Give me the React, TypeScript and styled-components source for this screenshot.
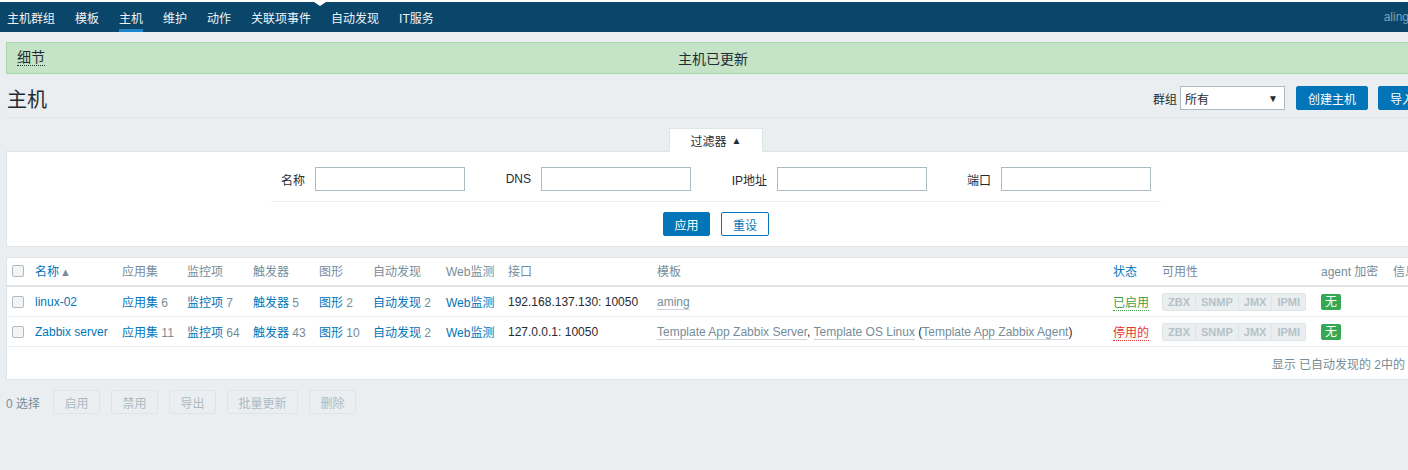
import React from 'react'
import styled, { createGlobalStyle } from 'styled-components'

const GlobalStyle = createGlobalStyle`
  body {
    margin: 0;
    background: #ebeef0;
    color: #1f2c33;
    font-family: "Liberation Sans", Arial, "Noto Sans CJK SC", sans-serif;
    font-size: 12px;
    overflow: hidden;
  }
`

const Page = styled.div`
  width: 1426px;
`

const TopNav = styled.nav`
  position: relative;
  display: flex;
  align-items: stretch;
  height: 30px;
  border-top: 2px solid #ffffff;
  background: #0a466a;
  padding-left: 7px;
  gap: 20px;
  &::before {
    content: '';
    position: absolute;
    top: 0;
    left: 314px;
    border-left: 6px solid transparent;
    border-right: 6px solid transparent;
    border-top: 4px solid #ffffff;
  }
`

const NavItem = styled.a<{ $active?: boolean }>`
  display: flex;
  align-items: center;
  color: #f0f3f5;
  text-decoration: none;
  border-bottom: 3px solid ${(p) => (p.$active ? '#1f85c9' : 'transparent')};
  padding-top: 3px;
`

const NavUser = styled.span`
  margin-left: auto;
  display: flex;
  align-items: center;
  padding-right: 17px;
  color: #7fa1b5;
`

const Main = styled.main`
  padding: 10px 6px 0 6px;
`

const Message = styled.div`
  position: relative;
  height: 30px;
  display: flex;
  align-items: center;
  justify-content: center;
  background: #c5e3c7;
  border: 1px solid #a6d8a8;
  font-size: 14px;
  color: #1f2c33;
`

const Details = styled.a`
  position: absolute;
  left: 10px;
  top: 7px;
  color: #1f2c33;
  text-decoration: none;
  line-height: 15px;
  border-bottom: 1px dotted #1f2c33;
`

const Header = styled.header`
  display: flex;
  align-items: center;
  height: 24px;
  margin-top: 12px;
  padding-bottom: 7px;
  border-bottom: 1px solid #dfe4e7;
`

const Title = styled.h1`
  margin: 0;
  padding-left: 1px;
  font-size: 20px;
  font-weight: normal;
  color: #1f2c33;
`

const HeaderControls = styled.div`
  margin-left: auto;
  margin-right: -16px;
  display: flex;
  align-items: center;
`

const SelectLabel = styled.span`
  margin-right: 3px;
`

const FakeSelect = styled.div`
  height: 24px;
  display: flex;
  align-items: center;
  justify-content: space-between;
  padding: 0 6px 0 4px;
  box-sizing: border-box;
  width: 105px;
  border: 1px solid #acbbc2;
  background: #ffffff;
  margin-right: 11px;
  font-size: 12px;
`

const Arrow = styled.span`
  font-size: 10px;
  color: #1f2c33;
`

const PrimaryButton = styled.button<{ $w?: number }>`
  height: 24px;
  width: ${(p) => p.$w ?? 47}px;
  padding: 0;
  border: 1px solid #0275b8;
  border-radius: 2px;
  background: #0275b8;
  color: #ffffff;
  font: inherit;
  margin-right: 10px;
`

const OutlineButton = styled.button`
  height: 24px;
  width: 48px;
  padding: 0;
  border: 1px solid #0275b8;
  border-radius: 2px;
  background: #ffffff;
  color: #0275b8;
  font: inherit;
`

const TabRow = styled.div`
  display: flex;
  justify-content: center;
  padding-left: 6px;
  margin-top: 10px;
`

const FilterTab = styled.div`
  position: relative;
  z-index: 1;
  width: 92px;
  height: 23px;
  margin-bottom: -1px;
  display: flex;
  align-items: center;
  justify-content: center;
  gap: 5px;
  background: #ffffff;
  border: 1px solid #dfe4e7;
  border-bottom: none;
`

const FilterBox = styled.section`
  background: #ffffff;
  border: 1px solid #dfe4e7;
  padding: 15px 0 10px 6px;
`

const FilterGrid = styled.div`
  width: 890px;
  margin: 0 auto;
  display: grid;
  grid-template-columns: 44px 150px 76px 150px 86px 150px 74px 150px;
  padding-right: 10px;
  box-sizing: border-box;
  align-items: center;
  padding-bottom: 10px;
  border-bottom: 1px solid #ebeef0;
`

const FilterLabel = styled.label`
  text-align: right;
  padding-right: 10px;
`

const TextInput = styled.input`
  width: 150px;
  height: 24px;
  box-sizing: border-box;
  border: 1px solid #acbbc2;
  padding: 0 5px;
  font: inherit;
`

const FilterButtons = styled.div`
  display: flex;
  justify-content: center;
  padding-top: 10px;
  & > button:first-child {
    margin-right: 11px;
  }
`

const TableBox = styled.section`
  margin-top: 10px;
  background: #ffffff;
  border: 1px solid #dfe4e7;
`

const Table = styled.table`
  width: 100%;
  table-layout: fixed;
  border-collapse: collapse;
  white-space: nowrap;
`

const Th = styled.th<{ $sort?: boolean }>`
  height: 28px;
  box-sizing: border-box;
  padding: 0 0 3px 5px;
  text-align: left;
  font-weight: normal;
  color: ${(p) => (p.$sort ? '#0275b8' : '#768d99')};
  border-bottom: 2px solid #dfe4e7;
  overflow: hidden;
`

const Td = styled.td`
  height: 29px;
  padding: 0 0 0 5px;
  border-bottom: 1px solid #ebeef0;
  overflow: hidden;
`

const SortArrow = styled.span`
  color: #768d99;
  font-size: 11px;
  margin-left: 1px;
`

const Check = styled.span`
  display: inline-block;
  width: 10px;
  height: 10px;
  border: 1px solid #acbbc2;
  border-radius: 2px;
  background: #f2f4f5;
  vertical-align: middle;
`

const Link = styled.a`
  color: #0275b8;
  text-decoration: none;
`

const Count = styled.span`
  color: #768d99;
`

const AltLink = styled.a`
  color: #768d99;
  text-decoration: none;
  border-bottom: 1px solid #cbd4d9;
`

const Status = styled.span<{ $on: boolean }>`
  color: ${(p) => (p.$on ? '#429e47' : '#e33734')};
  border-bottom: 1px dotted ${(p) => (p.$on ? '#429e47' : '#e33734')};
`

const Avail = styled.span`
  display: inline-flex;
  border: 1px solid #dfe4e7;
  border-radius: 2px;
  vertical-align: middle;
`

const AvailItem = styled.span`
  height: 16px;
  line-height: 16px;
  padding: 0 5px;
  background: #ebeef0;
  color: #b4c2c9;
  font-size: 11px;
  font-weight: bold;
  & + & {
    border-left: 1px solid #dfe4e7;
  }
`

const Encrypt = styled.span`
  display: inline-block;
  width: 20px;
  height: 16px;
  line-height: 16px;
  text-align: center;
  border-radius: 2px;
  background: #34a853;
  color: #ffffff;
  vertical-align: middle;
`

const TableFooter = styled.div`
  height: 32px;
  display: flex;
  align-items: center;
  justify-content: flex-end;
  padding-right: 4px;
  color: #768d99;
`

const ActionBar = styled.div`
  display: flex;
  align-items: center;
  margin-top: 10px;
  gap: 11px;
`

const Selected = styled.span`
  color: #768d99;
  margin-right: 2px;
`

const DisabledButton = styled.button<{ $w?: number }>`
  height: 24px;
  width: ${(p) => p.$w ?? 47}px;
  padding: 0;
  border: 1px solid #dfe4e7;
  border-radius: 2px;
  background: transparent;
  color: #acbbc2;
  font: inherit;
`

const cols = [23, 87, 65, 66, 66, 54, 73, 62, 149, 456, 49, 159, 72, 40]

type Host = {
  name: string
  apps: number
  items: number
  triggers: number
  graphs: number
  discovery: number
  iface: string
  templates: React.ReactNode
  enabled: boolean
}

const hosts: Host[] = [
  {
    name: 'linux-02',
    apps: 6,
    items: 7,
    triggers: 5,
    graphs: 2,
    discovery: 2,
    iface: '192.168.137.130: 10050',
    templates: <AltLink>aming</AltLink>,
    enabled: true,
  },
  {
    name: 'Zabbix server',
    apps: 11,
    items: 64,
    triggers: 43,
    graphs: 10,
    discovery: 2,
    iface: '127.0.0.1: 10050',
    templates: (
      <>
        <AltLink>Template App Zabbix Server</AltLink>,{' '}
        <AltLink>Template OS Linux</AltLink> (
        <AltLink>Template App Zabbix Agent</AltLink>)
      </>
    ),
    enabled: false,
  },
]

const navItems = ['主机群组', '模板', '主机', '维护', '动作', '关联项事件', '自动发现', 'IT服务']

const App: React.FC = () => {
  return (
    <Page>
      <GlobalStyle />
      <TopNav>
        {navItems.map((n) => (
          <NavItem key={n} $active={n === '主机'}>
            {n}
          </NavItem>
        ))}
        <NavUser>aling</NavUser>
      </TopNav>
      <Main>
        <Message>
          <Details>细节</Details>
          主机已更新
        </Message>

        <Header>
          <Title>主机</Title>
          <HeaderControls>
            <SelectLabel>群组</SelectLabel>
            <FakeSelect>
              所有<Arrow>▼</Arrow>
            </FakeSelect>
            <PrimaryButton $w={72}>创建主机</PrimaryButton>
            <PrimaryButton $w={48}>导入</PrimaryButton>
          </HeaderControls>
        </Header>

        <TabRow>
          <FilterTab>
            过滤器 <Arrow>▲</Arrow>
          </FilterTab>
        </TabRow>
        <FilterBox>
          <FilterGrid>
            <FilterLabel>名称</FilterLabel>
            <TextInput />
            <FilterLabel>DNS</FilterLabel>
            <TextInput />
            <FilterLabel>IP地址</FilterLabel>
            <TextInput />
            <FilterLabel>端口</FilterLabel>
            <TextInput />
          </FilterGrid>
          <FilterButtons>
            <PrimaryButton $w={47}>应用</PrimaryButton>
            <OutlineButton>重设</OutlineButton>
          </FilterButtons>
        </FilterBox>

        <TableBox>
          <Table>
            <colgroup>
              {cols.map((w, i) => (
                <col key={i} style={{ width: w }} />
              ))}
            </colgroup>
            <thead>
              <tr>
                <Th>
                  <Check />
                </Th>
                <Th $sort>
                  名称<SortArrow>▲</SortArrow>
                </Th>
                <Th>应用集</Th>
                <Th>监控项</Th>
                <Th>触发器</Th>
                <Th>图形</Th>
                <Th>自动发现</Th>
                <Th>Web监测</Th>
                <Th>接口</Th>
                <Th>模板</Th>
                <Th $sort>状态</Th>
                <Th>可用性</Th>
                <Th>agent 加密</Th>
                <Th>信息</Th>
              </tr>
            </thead>
            <tbody>
              {hosts.map((h) => (
                <tr key={h.name}>
                  <Td>
                    <Check />
                  </Td>
                  <Td>
                    <Link>{h.name}</Link>
                  </Td>
                  <Td>
                    <Link>应用集</Link> <Count>{h.apps}</Count>
                  </Td>
                  <Td>
                    <Link>监控项</Link> <Count>{h.items}</Count>
                  </Td>
                  <Td>
                    <Link>触发器</Link> <Count>{h.triggers}</Count>
                  </Td>
                  <Td>
                    <Link>图形</Link> <Count>{h.graphs}</Count>
                  </Td>
                  <Td>
                    <Link>自动发现</Link> <Count>{h.discovery}</Count>
                  </Td>
                  <Td>
                    <Link>Web监测</Link>
                  </Td>
                  <Td>{h.iface}</Td>
                  <Td>{h.templates}</Td>
                  <Td>
                    <Status $on={h.enabled}>{h.enabled ? '已启用' : '停用的'}</Status>
                  </Td>
                  <Td>
                    <Avail>
                      <AvailItem>ZBX</AvailItem>
                      <AvailItem>SNMP</AvailItem>
                      <AvailItem>JMX</AvailItem>
                      <AvailItem>IPMI</AvailItem>
                    </Avail>
                  </Td>
                  <Td>
                    <Encrypt>无</Encrypt>
                  </Td>
                  <Td />
                </tr>
              ))}
            </tbody>
          </Table>
          <TableFooter>显示 已自动发现的 2中的 2</TableFooter>
        </TableBox>

        <ActionBar>
          <Selected>0 选择</Selected>
          <DisabledButton>启用</DisabledButton>
          <DisabledButton>禁用</DisabledButton>
          <DisabledButton>导出</DisabledButton>
          <DisabledButton $w={71}>批量更新</DisabledButton>
          <DisabledButton>删除</DisabledButton>
        </ActionBar>
      </Main>
    </Page>
  )
}

export default App
